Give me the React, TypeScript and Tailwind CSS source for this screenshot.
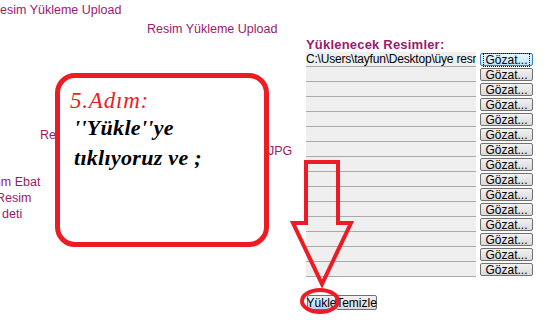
import React from "react";

const purple = "text-[#9a1a6c]";

function GozatButton({ focused }: { focused?: boolean }) {
  return (
    <div
      className={
        "ml-[4px] w-[53px] h-[13px] rounded-[2px] border flex items-center justify-center text-[12px] leading-none text-black " +
        (focused
          ? "border-[#3c7fb1] bg-gradient-to-b from-[#eaf6fd] to-[#bee6fd]"
          : "border-[#707070] bg-gradient-to-b from-[#f2f2f2] to-[#d9d9d9]")
      }
    >
      <span className={focused ? "outline-1 outline-dotted outline-black px-[1px]" : ""}>Gözat...</span>
    </div>
  );
}

function FileRow({ value, focused }: { value?: string; focused?: boolean }) {
  return (
    <div className="flex items-center h-[15px]">
      <div className="w-[170px] h-[15px] bg-[#efefef] border-b border-[#a9a9a9] overflow-hidden whitespace-nowrap text-[12px] leading-[14px] text-black tracking-[-0.2px]">
        {value}
      </div>
      <GozatButton focused={focused} />
    </div>
  );
}

export default function App() {
  const rows = Array.from({ length: 15 }, (_, i) => i);
  return (
    <div
      className="relative w-[558px] h-[327px] overflow-hidden bg-white"
      style={{ fontFamily: "'Liberation Sans', Arial, sans-serif" }}
    >
      <div className={"ml-[-9px] pt-[3px] text-[12.5px] leading-[15px] " + purple}>Resim Yükleme Upload</div>
      <div className="flex">
        <div className="w-[306px] shrink-0 relative">
          <div className={"ml-[147px] mt-[4px] text-[12.5px] leading-[15px] " + purple}>Resim Yükleme Upload</div>
          <div className={"ml-[40px] mt-[91px] text-[12.5px] leading-[15px] " + purple}>Re</div>
          <div className={"ml-[268px] mt-[1px] text-[12.5px] leading-[15px] " + purple}>JPG</div>
          <div className={"ml-[-2px] mt-[15px] text-[12.5px] leading-[16px] " + purple}>
            <div>im Ebat</div>
            <div className="ml-[-2px]">Resim</div>
            <div className="ml-[4px]">deti</div>
          </div>
        </div>
        <div className="flex flex-col">
          <div className={"mt-[19px] font-bold text-[13px] leading-[15px] tracking-[0.2px] " + purple}>Yüklenecek Resimler:</div>
          <div className="flex flex-col">
            {rows.map((i) => (
              <FileRow
                key={i}
                value={i === 0 ? "C:\\Users\\tayfun\\Desktop\\üye resm" : undefined}
                focused={i === 0}
              />
            ))}
          </div>
          <div className="mt-[18px] flex ml-[1px]">
            <div className="h-[15px] w-[29px] flex items-center justify-center text-[12px] leading-none text-black border border-[#3c7fb1] rounded-[2px] bg-gradient-to-b from-[#eaf6fd] to-[#a7d9f5]">
              Yükle
            </div>
            <div className="h-[15px] w-[41px] flex items-center justify-center text-[12px] leading-none text-black border border-[#707070] rounded-[2px] bg-gradient-to-b from-[#f2f2f2] to-[#d9d9d9]">
              Temizle
            </div>
          </div>
        </div>
      </div>

      {/* callout box */}
      <div
        className="absolute left-[55px] top-[73px] w-[214px] h-[174px] border-[5px] border-[#ed1c24] rounded-[20px] bg-white pl-[10px] pt-[11px]"
        style={{ fontFamily: "'Liberation Serif', serif" }}
      >
        <div className="italic text-[#ed1c24] text-[23px] leading-[24px] tracking-[0.8px]">5.Adım:</div>
        <div className="italic font-bold text-black text-[22px] leading-[30px] ml-[4px] tracking-[0.3px]">
          <div>''Yükle''ye</div>
          <div>tıklıyoruz ve ;</div>
        </div>
      </div>

      {/* arrow and ellipse */}
      <svg className="absolute left-0 top-0" width="558" height="327" viewBox="0 0 558 327">
        <polygon
          points="306,162 338,162 338,223 351,223 322,284 293,223 306,223"
          fill="none"
          stroke="#ed1c24"
          strokeWidth="4"
          strokeLinejoin="miter"
        />
        <ellipse cx="320" cy="301" rx="18" ry="11" fill="none" stroke="#ed1c24" strokeWidth="4" />
      </svg>
    </div>
  );
}
